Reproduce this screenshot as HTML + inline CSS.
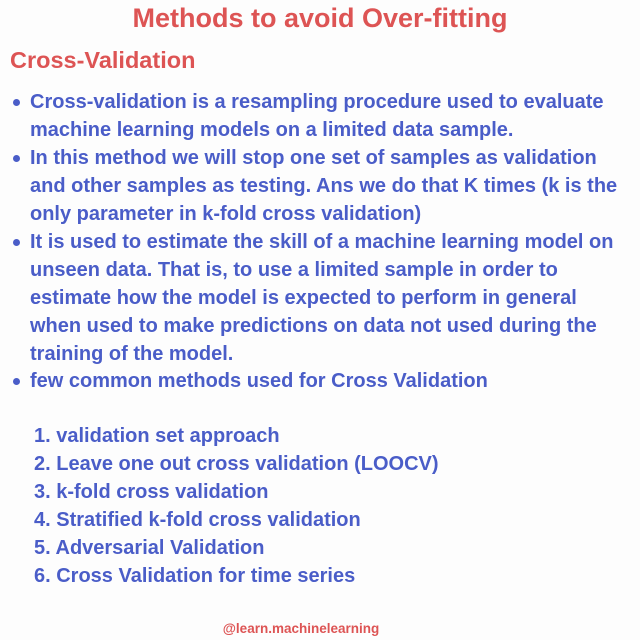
<!DOCTYPE html>
<html><head><meta charset="utf-8"><style>
html,body{margin:0;padding:0;background:#fdfdfd;}
body{width:640px;height:640px;position:relative;overflow:hidden;font-family:"Liberation Sans",Arial,sans-serif;font-weight:bold;}
.t{position:absolute;white-space:nowrap;}
.title{left:0;width:640px;text-align:center;top:3px;font-size:27px;color:#dd5454;}
.h{left:10px;top:47px;font-size:23.5px;color:#dd5454;}
.b{color:#4a5dc8;font-size:20px;left:30px;}
.dot{position:absolute;width:7px;height:7px;border-radius:50%;background:#4a5dc8;left:13px;}
.n{color:#4a5dc8;font-size:20px;left:34px;}
.f{left:0;width:602px;text-align:center;top:621px;font-size:13.5px;color:#dd5454;}
</style></head><body>
<div class="t title">Methods to avoid Over-fitting</div>
<div class="t h">Cross-Validation</div>
<div class="dot" style="top:99px"></div>
<div class="t b" style="top:91px">Cross-validation is a resampling procedure used to evaluate</div>
<div class="t b" style="top:119px">machine learning models on a limited data sample.</div>
<div class="dot" style="top:155px"></div>
<div class="t b" style="top:147px">In this method we will stop one set of samples as validation</div>
<div class="t b" style="top:175px">and other samples as testing. Ans we do that K times (k is the</div>
<div class="t b" style="top:203px">only parameter in k-fold cross validation)</div>
<div class="dot" style="top:239px"></div>
<div class="t b" style="top:231px">It is used to estimate the skill of a machine learning model on</div>
<div class="t b" style="top:259px">unseen data. That is, to use a limited sample in order to</div>
<div class="t b" style="top:287px">estimate how the model is expected to perform in general</div>
<div class="t b" style="top:315px">when used to make predictions on data not used during the</div>
<div class="t b" style="top:343px">training of the model.</div>
<div class="dot" style="top:378px"></div>
<div class="t b" style="top:370px">few common methods used for Cross Validation</div>
<div class="t n" style="top:425px">1. validation set approach</div>
<div class="t n" style="top:453px">2. Leave one out cross validation (LOOCV)</div>
<div class="t n" style="top:481px">3. k-fold cross validation</div>
<div class="t n" style="top:509px">4. Stratified k-fold cross validation</div>
<div class="t n" style="top:537px">5. Adversarial Validation</div>
<div class="t n" style="top:565px">6. Cross Validation for time series</div>
<div class="t f">@learn.machinelearning</div>
</body></html>
